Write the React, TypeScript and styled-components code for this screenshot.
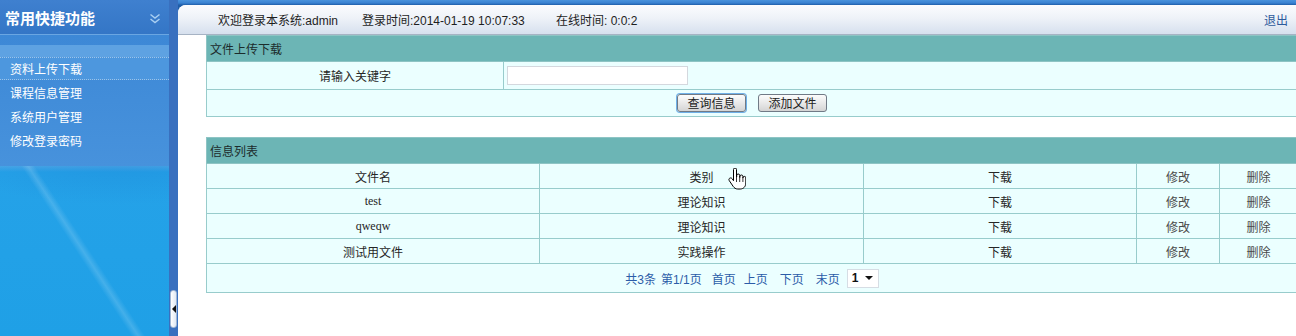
import React from "react";
import styled, { createGlobalStyle } from "styled-components";

const GlobalStyle = createGlobalStyle`
  html, body {
    margin: 0;
    padding: 0;
  }
  body {
    width: 1296px;
    height: 336px;
    overflow: hidden;
    background: #ffffff;
    font-family: "Liberation Sans", "Noto Sans CJK SC", sans-serif;
    font-size: 12px;
    color: #222;
  }
`;

const Page = styled.div`
  position: relative;
  display: flex;
  width: 1296px;
  height: 336px;
  background: linear-gradient(180deg, #4a93dc 0, #3a82d2 3px, #1f5da8 5px, #1f5da8 6px);
  overflow: hidden;
`;

const Sidebar = styled.div`
  width: 169px;
  display: flex;
  flex-direction: column;
  background: #3c86d4;
`;

const SideTitle = styled.div`
  height: 35px;
  box-sizing: border-box;
  display: flex;
  align-items: center;
  justify-content: space-between;
  padding: 0 8px 0 5px;
  background: linear-gradient(180deg, #3f80cf 0, #3476c6 100%);
  border-bottom: 1px solid #6aa6e2;
  color: #fff;
  font-family: "Noto Sans CJK SC", sans-serif;
  font-size: 15px;
  font-weight: bold;
`;

const Chevron = styled.svg`
  margin-top: 2px;
`;

const MenuArea = styled.div`
  background: linear-gradient(180deg, #3d88d6 0, #4792dc 100%);
  padding-top: 10px;
`;

const Band = styled.div`
  height: 12px;
  background: #5ea2e2;
`;

const MenuItem = styled.div<{ $active?: boolean }>`
  height: 24px;
  box-sizing: border-box;
  display: flex;
  align-items: center;
  padding-left: 10px;
  color: #fff;
  font-family: "Noto Sans CJK SC", sans-serif;
  font-size: 12px;
  ${(p) =>
    p.$active &&
    `
    height: 23px;
    border-top: 1px dotted #9cc4ea;
    border-bottom: 1px dotted #9cc4ea;
    background: #4d97de;
  `}
`;

const MenuList = styled.div`
  padding-bottom: 14px;
`;

const SideDecor = styled.div`
  flex: 1;
  background:
    linear-gradient(57deg, transparent 47%, rgba(255, 255, 255, 0.16) 49.5%, transparent 52%),
    radial-gradient(ellipse 260px 70px at 120px -10px, rgba(20, 110, 200, 0.25), transparent 70%),
    linear-gradient(180deg, #4ba8e8 0, #25a2e8 6px, #1fa0e6 100%);
`;

const Splitter = styled.div`
  width: 9px;
  display: flex;
  flex-direction: column;
  justify-content: flex-end;
  align-items: center;
  padding-bottom: 8px;
  box-sizing: border-box;
  background: #3970bf;
`;

const Handle = styled.div`
  width: 7px;
  height: 38px;
  border-radius: 3px;
  background: linear-gradient(90deg, #ffffff, #dfe8f3);
  border: 1px solid #9fb6d4;
  box-sizing: border-box;
  display: flex;
  align-items: center;
  justify-content: center;
`;

const Main = styled.div`
  flex: 1;
  margin-top: 5px;
  background: #ffffff;
  border-top-left-radius: 8px;
  overflow: hidden;
  display: flex;
  flex-direction: column;
`;

const TopBar = styled.div`
  height: 30px;
  box-sizing: border-box;
  display: flex;
  align-items: center;
  padding: 0 8px 1px 40px;
  background: linear-gradient(180deg, #fbfcfe 0, #eef2f8 45%, #d6e0ee 100%);
  border-bottom: 1px solid #a6b3c4;
  font-size: 12px;
  color: #1e1e1e;
`;

const Info = styled.span<{ $w: number }>`
  width: ${(p) => p.$w}px;
  white-space: nowrap;
`;

const Logout = styled.span`
  margin-left: auto;
  color: #2d5a9c;
`;

const Content = styled.div`
  padding-left: 28px;
`;

const Block = styled.table`
  width: 1092px;
  border-collapse: collapse;
  border: 1px solid #8ec4c4;
  margin-bottom: 20px;
  table-layout: fixed;
`;

const Caption = styled.th`
  height: 25px;
  padding: 0 0 0 3px;
  background: #6cb5b5;
  text-align: left;
  font-weight: normal;
  font-size: 12px;
  color: #1c2c2c;
  border: 1px solid #8ec4c4;
`;

const Cell = styled.td<{ $h?: number; $left?: boolean; $serif?: boolean; $muted?: boolean }>`
  height: ${(p) => p.$h ?? 24}px;
  padding: 0;
  background: #ebffff;
  border: 1px solid #98cccc;
  text-align: ${(p) => (p.$left ? "left" : "center")};
  font-size: 12px;
  color: ${(p) => (p.$muted ? "#4a4a4a" : "#262626")};
  font-family: ${(p) =>
    p.$serif ? `"Liberation Serif", "Noto Sans CJK SC", serif` : `"Liberation Sans", "Noto Sans CJK SC", sans-serif`};
`;

const Field = styled.input`
  width: 181px;
  height: 19px;
  box-sizing: border-box;
  margin-left: 3px;
  border: 1px solid #d4d8de;
  background: #fff;
  vertical-align: middle;
`;

const Button = styled.button<{ $focus?: boolean }>`
  width: 69px;
  height: 18px;
  margin: 0 6px;
  padding: 0;
  box-sizing: border-box;
  border: 1px solid #707a86;
  border-radius: 3px;
  background: linear-gradient(180deg, #fcfcfc 0, #e9e9e9 50%, #d4d4d4 100%);
  font-family: "Noto Sans CJK SC", sans-serif;
  font-size: 12px;
  line-height: 16px;
  color: #222;
  vertical-align: middle;
  box-shadow: ${(p) => (p.$focus ? "0 0 0 1px #6fb0e8" : "none")};
`;

const Pager = styled.div`
  display: inline-flex;
  align-items: center;
  color: #2b5ca8;
  font-size: 12px;
`;

const PageLink = styled.span<{ $ml: number }>`
  margin-left: ${(p) => p.$ml}px;
`;

const PageSelect = styled.span`
  margin-left: 7px;
  width: 32px;
  height: 19px;
  box-sizing: border-box;
  display: inline-flex;
  align-items: center;
  justify-content: space-between;
  padding: 0 5px 0 4px;
  background: #fff;
  border: 1px solid #d6dde4;
  color: #111;
  font-size: 12px;
  font-weight: bold;
`;

const Caret = styled.span`
  width: 0;
  height: 0;
  border-left: 4px solid transparent;
  border-right: 4px solid transparent;
  border-top: 4px solid #111;
`;

const Pointer = styled.svg`
  position: absolute;
  left: 728px;
  top: 168px;
`;

const rows = [
  { name: "test", kind: "理论知识", serif: true },
  { name: "qweqw", kind: "理论知识", serif: true },
  { name: "测试用文件", kind: "实践操作", serif: false },
];

const menu = ["资料上传下载", "课程信息管理", "系统用户管理", "修改登录密码"];

export default function App() {
  return (
    <>
      <GlobalStyle />
      <Page>
        <Sidebar>
          <SideTitle>
            <span>常用快捷功能</span>
            <Chevron width="12" height="11" viewBox="0 0 12 11">
              <path d="M1.5 1.5l4.5 3.5 4.5-3.5M1.5 6l4.5 3.5 4.5-3.5" fill="none" stroke="#a9cff2" strokeWidth="1.5" />
            </Chevron>
          </SideTitle>
          <MenuArea>
            <Band />
            <MenuList>
              {menu.map((m, i) => (
                <MenuItem key={m} $active={i === 0}>
                  {m}
                </MenuItem>
              ))}
            </MenuList>
          </MenuArea>
          <SideDecor />
        </Sidebar>
        <Splitter>
          <Handle>
            <svg width="4" height="8" viewBox="0 0 4 8">
              <path d="M4 0L0 4l4 4z" fill="#111" />
            </svg>
          </Handle>
        </Splitter>
        <Main>
          <TopBar>
            <Info $w={144}>欢迎登录本系统:admin</Info>
            <Info $w={194}>登录时间:2014-01-19 10:07:33</Info>
            <Info $w={100}>在线时间: 0:0:2</Info>
            <Logout>退出</Logout>
          </TopBar>
          <Content>
            <Block>
              <colgroup>
                <col style={{ width: 297 }} />
                <col />
              </colgroup>
              <tbody>
                <tr>
                  <Caption colSpan={2}>文件上传下载</Caption>
                </tr>
                <tr>
                  <Cell $h={27}>请输入关键字</Cell>
                  <Cell $h={27} $left>
                    <Field />
                  </Cell>
                </tr>
                <tr>
                  <Cell $h={26} colSpan={2}>
                    <Button $focus>查询信息</Button>
                    <Button>添加文件</Button>
                  </Cell>
                </tr>
              </tbody>
            </Block>
            <Block>
              <colgroup>
                <col style={{ width: 333 }} />
                <col style={{ width: 324 }} />
                <col style={{ width: 273 }} />
                <col style={{ width: 83 }} />
                <col />
              </colgroup>
              <tbody>
                <tr>
                  <Caption colSpan={5}>信息列表</Caption>
                </tr>
                <tr>
                  <Cell>文件名</Cell>
                  <Cell>类别</Cell>
                  <Cell>下载</Cell>
                  <Cell $muted>修改</Cell>
                  <Cell $muted>删除</Cell>
                </tr>
                {rows.map((r) => (
                  <tr key={r.name}>
                    <Cell $serif={r.serif}>{r.name}</Cell>
                    <Cell>{r.kind}</Cell>
                    <Cell>下载</Cell>
                    <Cell $muted>修改</Cell>
                    <Cell $muted>删除</Cell>
                  </tr>
                ))}
                <tr>
                  <Cell colSpan={5} $h={28}>
                    <Pager>
                      <span>共3条</span>
                      <PageLink $ml={5}>第1/1页</PageLink>
                      <PageLink $ml={10}>首页</PageLink>
                      <PageLink $ml={8}>上页</PageLink>
                      <PageLink $ml={12}>下页</PageLink>
                      <PageLink $ml={12}>末页</PageLink>
                      <PageSelect>
                        1<Caret />
                      </PageSelect>
                    </Pager>
                  </Cell>
                </tr>
              </tbody>
            </Block>
          </Content>
        </Main>
        <Pointer width="18" height="22" viewBox="0 0 18 22">
          <path
            d="M5.5 1.5a1.5 1.5 0 0 1 3 0V9h.2V7.5a1.5 1.5 0 0 1 3 0V9.5h.2V8.5a1.5 1.5 0 0 1 3 0V10h.1V9.8a1.4 1.4 0 0 1 2.8 0V15c0 3.5-2.3 6-5.6 6H9.8c-2.2 0-3.5-1-4.7-2.7L1.3 12.7c-.7-1-.4-2 .4-2.5.8-.5 1.8-.3 2.4.5l1.4 2V1.5z"
            fill="#fff"
            stroke="#000"
            strokeWidth="1"
          />
          <path d="M8.5 9v5M11.7 9.5V14M14.9 10v4" stroke="#000" strokeWidth="0.8" />
        </Pointer>
      </Page>
    </>
  );
}
